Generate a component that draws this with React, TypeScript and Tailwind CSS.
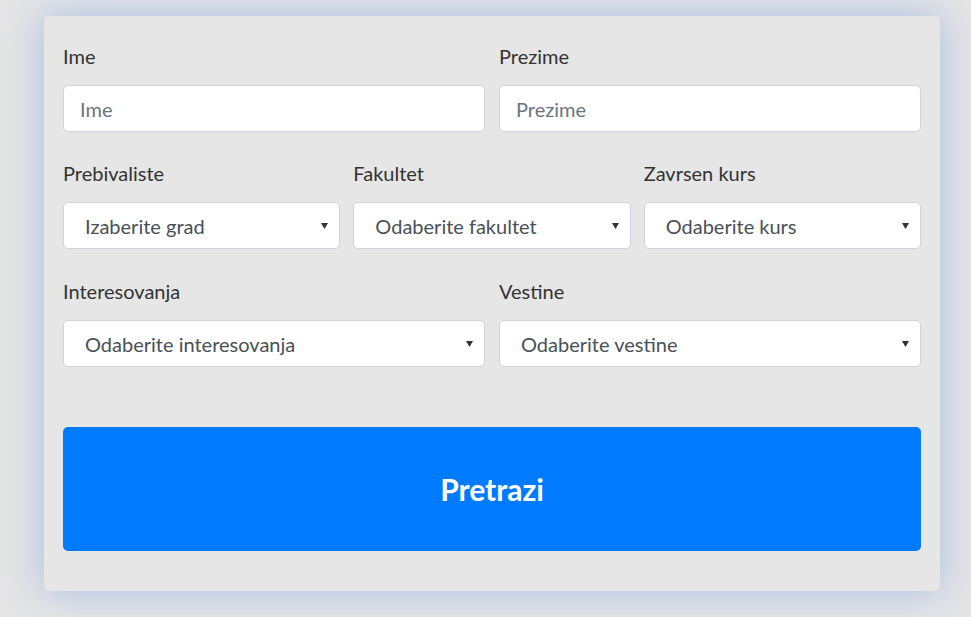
import React from 'react'

const Field = ({ label, placeholder }: { label: string; placeholder: string }) => (
  <div className="flex flex-col">
    <label className="text-[20px] leading-[27px] text-[#333333] mb-[15px]">{label}</label>
    <input
      type="text"
      placeholder={placeholder}
      className="h-[47px] w-full bg-white rounded-[5px] border border-[#ced4da] px-[16px] text-[20px] text-[#495057] placeholder:text-[#6c757d] outline-none"
    />
  </div>
)

const SelectField = ({ label, value }: { label: string; value: string }) => (
  <div className="flex flex-col">
    <label className="text-[20px] leading-[27px] text-[#333333] mb-[15px]">{label}</label>
    <div className="relative h-[47px] w-full bg-white rounded-[5px] border border-[#ced4da]">
      <select className="appearance-none h-full w-full bg-transparent pl-[21px] pr-[30px] text-[20px] text-[#495057] outline-none">
        <option>{value}</option>
      </select>
      <svg className="absolute right-[11px] top-[20px] pointer-events-none" width="7" height="6" viewBox="0 0 7 6">
        <path d="M0 0 L7 0 L3.5 6 Z" fill="#333333" />
      </svg>
    </div>
  </div>
)

export default function App() {
  return (
    <div className="min-h-screen bg-[#e5e5e6] pt-[16px] pl-[44px] font-['Lato',sans-serif]">
      <div className="w-[896px] bg-[#e6e6e6] rounded-[5px] shadow-[0_0_40px_rgba(70,120,220,0.38)] px-[19px] pt-[27px] pb-[40px]">
        <div className="grid grid-cols-2 gap-x-[14px]">
          <Field label="Ime" placeholder="Ime" />
          <Field label="Prezime" placeholder="Prezime" />
        </div>
        <div className="grid grid-cols-3 gap-x-[13px] mt-[28px]">
          <SelectField label="Prebivaliste" value="Izaberite grad" />
          <SelectField label="Fakultet" value="Odaberite fakultet" />
          <SelectField label="Zavrsen kurs" value="Odaberite kurs" />
        </div>
        <div className="grid grid-cols-2 gap-x-[14px] mt-[29px]">
          <SelectField label="Interesovanja" value="Odaberite interesovanja" />
          <SelectField label="Vestine" value="Odaberite vestine" />
        </div>
        <button className="mt-[60px] w-full h-[124px] bg-[#007bff] rounded-[5px] text-white text-[30px] font-bold">
          Pretrazi
        </button>
      </div>
    </div>
  )
}
